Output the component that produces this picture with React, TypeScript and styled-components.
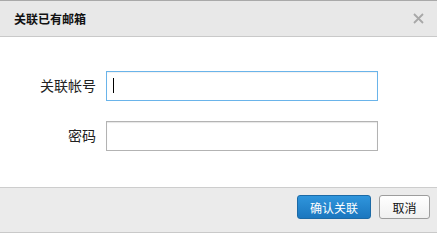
import React from 'react';
import styled, { createGlobalStyle } from 'styled-components';

const Global = createGlobalStyle`
  html, body {
    margin: 0;
    padding: 0;
    background: #fff;
  }
  body {
    font-family: 'Liberation Sans', 'Noto Sans CJK SC', sans-serif;
  }
`;

const Dialog = styled.div`
  width: 437px;
  background: #fff;
`;

const Header = styled.div`
  height: 35px;
  border-top: 1px solid #a9a9a9;
  border-bottom: 1px solid #c9c9c9;
  background: #e8e8e8;
  display: flex;
  align-items: center;
  justify-content: space-between;
  padding: 0 12px 0 14px;
`;

const Title = styled.div`
  font-size: 12px;
  font-weight: bold;
  color: #111;
`;

const Close = styled.button`
  width: 14px;
  height: 14px;
  padding: 0;
  border: 0;
  background: transparent;
  display: flex;
  align-items: center;
  justify-content: center;
  cursor: pointer;
`;

const Body = styled.div`
  height: 150px;
  box-sizing: border-box;
  padding-top: 34px;
  display: grid;
  grid-template-columns: 96px 272px;
  column-gap: 10px;
  row-gap: 20px;
  align-content: start;
`;

const Label = styled.label`
  font-size: 14px;
  color: #222;
  text-align: right;
  line-height: 30px;
`;

const Field = styled.div`
  position: relative;
  height: 30px;
`;

const Input = styled.input<{ $focused?: boolean }>`
  width: 100%;
  height: 30px;
  box-sizing: border-box;
  margin: 0;
  padding: 0 6px;
  font-size: 14px;
  font-family: inherit;
  outline: none;
  caret-color: transparent;
  border: 1px solid ${(p) => (p.$focused ? '#6ab4ea' : '#b3b3b3')};
  box-shadow: inset 0 1px 1px ${(p) => (p.$focused ? 'rgba(0,0,0,0.06)' : 'rgba(0,0,0,0.1)')};
  background: #fff;
`;

const Caret = styled.span`
  position: absolute;
  left: 7px;
  top: 7px;
  width: 1px;
  height: 15px;
  background: #000;
`;

const Footer = styled.div`
  height: 37px;
  border-top: 1px solid #cdcdcd;
  border-bottom: 1px solid #c9c9c9;
  background: #ebebeb;
  display: flex;
  justify-content: flex-end;
  align-items: flex-start;
  gap: 8px;
  padding: 7px 7px 0 0;
  box-sizing: content-box;
`;

const Button = styled.button<{ $primary?: boolean }>`
  height: 24px;
  box-sizing: border-box;
  padding: 0;
  width: ${(p) => (p.$primary ? '74px' : '51px')};
  font-size: 12px;
  font-family: inherit;
  border-radius: 3px;
  cursor: pointer;
  color: ${(p) => (p.$primary ? '#fff' : '#111')};
  border: 1px solid ${(p) => (p.$primary ? '#1c6aa6' : '#9d9d9d')};
  background: ${(p) =>
    p.$primary
      ? 'linear-gradient(#2f95dc, #1b77bf)'
      : 'linear-gradient(#ffffff, #f0f0f0)'};
`;

export default function App() {
  return (
    <>
      <Global />
      <Dialog>
        <Header>
          <Title>关联已有邮箱</Title>
          <Close aria-label="关闭">
            <svg width="11" height="11" viewBox="0 0 11 11">
              <path d="M1 1L10 10M10 1L1 10" stroke="#a8a8a8" strokeWidth="1.8" />
            </svg>
          </Close>
        </Header>
        <Body>
          <Label>关联帐号</Label>
          <Field>
            <Input $focused />
            <Caret />
          </Field>
          <Label>密码</Label>
          <Field>
            <Input type="password" />
          </Field>
        </Body>
        <Footer>
          <Button $primary>确认关联</Button>
          <Button>取消</Button>
        </Footer>
      </Dialog>
    </>
  );
}
